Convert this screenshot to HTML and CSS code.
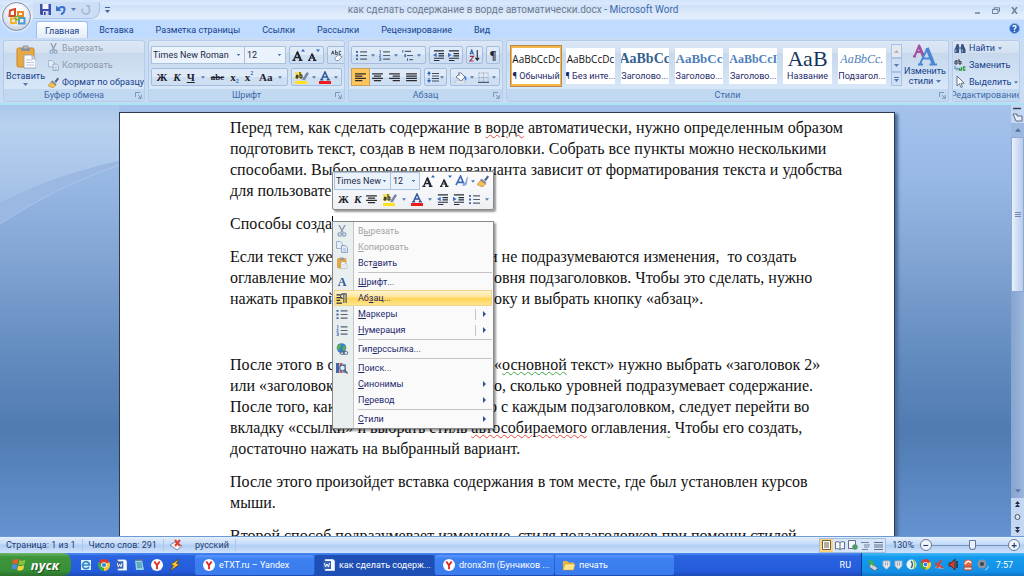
FILE: index.html
```html
<!DOCTYPE html>
<html lang="ru">
<head>
<meta charset="utf-8">
<title>как сделать содержание в ворде автоматически.docx - Microsoft Word</title>
<link rel="stylesheet" href="styles.css">
</head>
<body>
<svg class="sprite" aria-hidden="true">
  <symbol id="i-arrow" viewBox="0 0 5 3"><path d="M0 0h5L2.500 3z" fill="#5779ad"/></symbol>
  <symbol id="i-launch" viewBox="0 0 7 7"><path d="M.5 5V.5H5M3 3l3 3M6.300 3v3.300H3" fill="none" stroke="#7c94b8"/></symbol>
  <symbol id="i-cut" viewBox="0 0 12 12"><path d="M3 0l4 7.500M9 0L5 7.500" stroke="#8fa0b8" stroke-width="1.500" fill="none"/><circle cx="3.800" cy="9.500" r="1.700" fill="none" stroke="#8fa3bf" stroke-width="1.300"/><circle cx="8.200" cy="9.500" r="1.700" fill="none" stroke="#8fa3bf" stroke-width="1.300"/></symbol>
  <symbol id="i-copy" viewBox="0 0 12 12"><path d="M.5.5h4l2 2v5h-6z" fill="#e6edf6" stroke="#9fb2cc"/><path d="M5.500 4.500h4l2 2v5h-6z" fill="#dfe8f4" stroke="#94a9c6"/><path d="M7 8h3M7 10h3" stroke="#a8bad3"/></symbol>
  <symbol id="i-paste" viewBox="0 0 20 24"><rect x="1" y="3" width="17" height="19" rx="1.500" fill="#e9a941" stroke="#c98722"/><path d="M5 3h9v3H5z" fill="#8d949e"/><path d="M7 1h5v3H7z" fill="#b8bec6" stroke="#727a86" stroke-width=".6"/><path d="M8 10h8l4 4v9H8z" fill="#fbfdff" stroke="#8c9bb0" stroke-width=".8"/><path d="M16 10v4h4" fill="#cdd9ea" stroke="#8c9bb0" stroke-width=".6"/><path d="M10 15h6M10 17.500h8M10 20h8" stroke="#a9bad2" stroke-width=".8"/></symbol>
  <symbol id="i-brush" viewBox="0 0 12 12"><path d="M7 5l3.500-4.500 1.500 1.300L9 6z" fill="#4d5f86"/><path d="M4.500 3.500L9.500 7.500 8 9.500 3 5.500z" fill="#7f8fb3"/><path d="M3.500 5.500L8.500 9l-3 3-5.500-2.500z" fill="#f3c252" stroke="#a9792a" stroke-width=".6"/></symbol>
  <symbol id="i-bullets" viewBox="0 0 12 12"><path d="M4.500 2H12M4.500 6H12M4.500 10H12" stroke="#56606f" stroke-width="1.200"/><path d="M0 1h2.200v2H0zM0 5h2.200v2H0zM0 9h2.200v2H0z" fill="#3a62ad"/></symbol>
  <symbol id="i-numbers" viewBox="0 0 12 12"><path d="M4.500 2H12M4.500 6H12M4.500 10H12" stroke="#56606f" stroke-width="1.200"/><path d="M.5.500h1v3M0 4.600h1.800v1L.3 7H2M0 8.600h2v3H0M.6 10H2" stroke="#3a62ad" fill="none" stroke-width=".8"/></symbol>
  <symbol id="i-multi" viewBox="0 0 12 12"><path d="M3 1.500h7M5.500 6H12M8 10.500h4" stroke="#56606f" stroke-width="1.200"/><path d="M.8 0v3M3 4.800h1v2.500H3zM6 9v3" stroke="#3a62ad" fill="none"/></symbol>
  <symbol id="i-outdent" viewBox="0 0 12 12"><path d="M1 1h11M6 4h6M6 6.500h6M1 9h11M1 11.500h6" stroke="#222b3a" stroke-width="1.300"/><path d="M4 3v5L0 5.500z" fill="#3a6fc4"/></symbol>
  <symbol id="i-indent" viewBox="0 0 12 12"><path d="M1 1h11M6 4h6M6 6.500h6M1 9h11M1 11.500h6" stroke="#222b3a" stroke-width="1.300"/><path d="M0 3v5l4-2.500z" fill="#3a6fc4"/></symbol>
  <symbol id="i-left" viewBox="0 0 12 10"><path d="M0 1h12M0 3.500h8M0 6h12M0 8.500h8" stroke="#2b2b2f" stroke-width="1.300"/></symbol>
  <symbol id="i-center" viewBox="0 0 12 10"><path d="M0 1h12M2 3.500h8M0 6h12M2 8.500h8" stroke="#2b2b2f" stroke-width="1.300"/></symbol>
  <symbol id="i-right" viewBox="0 0 12 10"><path d="M0 1h12M4 3.500h8M0 6h12M4 8.500h8" stroke="#2b2b2f" stroke-width="1.300"/></symbol>
  <symbol id="i-justify" viewBox="0 0 12 10"><path d="M0 1h12M0 3.500h12M0 6h12M0 8.500h12" stroke="#2b2b2f" stroke-width="1.300"/></symbol>
  <symbol id="i-spacing" viewBox="0 0 12 12"><path d="M5 2.500h7M5 5h7M5 7.500h7M5 10h7" stroke="#444c5a"/><path d="M2 0l2 3H0zM2 12l2-3H0z" fill="#2f66bf"/><path d="M2 2v8" stroke="#2f66bf" stroke-dasharray="3 2"/></symbol>
  <symbol id="i-bucket" viewBox="0 0 13 12"><path d="M2 6l4.500-4.500L11 6l-4 4z" fill="#f6f8fb" stroke="#707d92"/><path d="M5 1v4" stroke="#707d92"/><path d="M10.500 4.500c2 1 2.500 3 1.500 5C10.500 9 10.500 7 10.500 4.500z" fill="#3c77cf"/><path d="M1 10h10v2H1z" fill="#fff" stroke="#97a5ba" stroke-width=".6"/></symbol>
  <symbol id="i-border" viewBox="0 0 12 12"><path d="M1 1h10v10M1 1v10M6 1v10M1 6h10" fill="none" stroke="#8b98ad" stroke-dasharray="1 1"/><path d="M0 11.300h12" stroke="#4c5a70" stroke-width="1.200"/></symbol>
  <symbol id="i-highlight" viewBox="0 0 14 13"><path d="M0 10h12v3H0z" fill="#ffe21c"/><path d="M0 1h7v7H0z" fill="#f4e05a"/><path d="M1 4.300h2V7H1V5.700h2M5 1v6h2V4H5" fill="none" stroke="#20242c" stroke-width="1"/><path d="M7.500 8.500L12 1.500l1.500 1L9.500 9z" fill="#7f93b8" stroke="#45557a" stroke-width=".5"/></symbol>
  <symbol id="i-fontcolor" viewBox="0 0 12 13"><path d="M0 10h12v3H0z" fill="#ee1c1c"/><path d="M2.500 8.500L6 1l3.500 7.500M3.800 6h4.400M1.200 8.700h3M7.800 8.700h3" fill="none" stroke="#31579c" stroke-width="1.500"/></symbol>
  <symbol id="i-eraser" viewBox="0 0 14 13"><path d="M1.500 6l1.500-4 1.500 4M2 4.500h2M6 1v5h2V3.500H6M12 2.500h-2V6h2" fill="none" stroke="#333c4c" stroke-width=".9"/><path d="M5 10l4-3.500 4 2-4 4H6.500z" fill="#fff" stroke="#7384a0" stroke-width=".9"/></symbol>
  <symbol id="i-sort" viewBox="0 0 12 14"><path d="M1 6L3 1l2 5M1.500 4.500h3" fill="none" stroke="#2c58b0" stroke-width="1.200"/><path d="M1 8h4L1 13h4" fill="none" stroke="#a3304a" stroke-width="1.200"/><path d="M9 1v11M7 9.500L9 12l2-2.500" fill="none" stroke="#20242c" stroke-width="1.200"/></symbol>
  <symbol id="i-bigstyles" viewBox="0 0 24 22"><path d="M1.500 12.500L6 2l4.500 10M3 8h6M0 12.500h3" fill="none" stroke="#a34f9c" stroke-width="2"/><path d="M6 2l4.500 10.500" stroke="#a34f9c" stroke-width="3"/><path d="M7 20L14 5M9.500 14.500h8M5 20.500h5M16.500 20.500H24" fill="none" stroke="#4a86d2" stroke-width="1.800"/><path d="M14 4l6.500 16" stroke="#4a86d2" stroke-width="3.500"/></symbol>
  <symbol id="i-binocs" viewBox="0 0 12 12"><path d="M1 5l1.500-4h2L5 5v6H0V7zM11 5L9.500 1h-2L7 5v6h5V7z" fill="#39527f"/><path d="M5 4h2v3H5z" fill="#7590bd"/><path d="M1.500 7v3M8.500 7v3" stroke="#b4c8e8"/></symbol>
  <symbol id="i-replace" viewBox="0 0 12 12"><path d="M3 2H1v3h2V1M5 0v5h2V2.500H5" fill="none" stroke="#2a3140"/><path d="M1 7v3h3M3 8.500L4.500 10 3 11.500" fill="none" stroke="#5e82c0"/><path d="M7.500 8v3h-2V9M11.500 8H9.500v3h2" fill="none" stroke="#2f9d3d" stroke-width="1.300"/></symbol>
  <symbol id="i-pointer" viewBox="0 0 12 12"><path d="M3 0v10l2.500-2.300L7 11.500l1.500-.7L7 7.300h3.300z" fill="#fff" stroke="#58677f" stroke-width=".9"/></symbol>
  <symbol id="i-para" viewBox="0 0 12 12"><path d="M0 2h4M0 5h5M0 8h4M0 11h6" stroke="#222b3a" stroke-width="1.300"/><path d="M11 1H7a2.500 2.500 0 0 0 0 5M8 1v10M10.500 1v10" fill="none" stroke="#3b4c74" stroke-width="1.200"/></symbol>
  <symbol id="i-globe" viewBox="0 0 12 12"><circle cx="5.500" cy="5" r="4.800" fill="#3a7fcb"/><path d="M2 2c3-2 4 1 2.500 2S4 7 2.500 7 0 4 2 2zM7 3c2-1 3 1 2.500 3S7 8 6.500 6z" fill="#5cb04e"/><rect x="4" y="8.500" width="4.500" height="2.800" rx="1.400" fill="none" stroke="#5b6980"/><rect x="7.300" y="8.500" width="4.500" height="2.800" rx="1.400" fill="none" stroke="#5b6980"/></symbol>
  <symbol id="i-lookup" viewBox="0 0 12 12"><path d="M0 1h3v10H0z" fill="#3f67b3"/><path d="M3.500 1h3v10h-3z" fill="#b85c56"/><path d="M7 2h3v9H7z" fill="#7193c9"/><circle cx="6.500" cy="6" r="2.800" fill="#dcebfa" stroke="#4c5a75"/><path d="M8.500 8l3 3.500" stroke="#4c5a75" stroke-width="1.500"/></symbol>
  <symbol id="i-styleset" viewBox="0 0 14 13"><path d="M1 11L6 1l4 10M3 8h6" fill="none" stroke="#3b69b5" stroke-width="1.700"/><path d="M8 12c0-3 1-4 3-4l2-6 1 .5L13 9c0 2-2 3-5 3z" fill="#8ca9d8"/></symbol>
  <symbol id="i-word" viewBox="0 0 12 12"><path d="M2 0h8l2 2v10H2z" fill="#f7faff" stroke="#7c99cf" stroke-width=".7"/><path d="M0 2h8v8H0z" fill="#3763b5"/><path d="M1.500 4l1 4L4 5l1.500 3 1-4" fill="none" stroke="#fff"/></symbol>
  <symbol id="i-yandex" viewBox="0 0 12 12"><circle cx="6" cy="6" r="6" fill="#fff"/><path d="M3.300 2.500L6 6.200v4M8.700 2.500L6 6.200" fill="none" stroke="#e0261c" stroke-width="1.800"/></symbol>
  <symbol id="i-folder" viewBox="0 0 12 12"><path d="M0 2h4l1.500 1.500H11V11H0z" fill="#e8b53c"/><path d="M0 11l2-6h10l-1.500 6z" fill="#ffe588" stroke="#c99a2d" stroke-width=".5"/></symbol>
  <symbol id="i-chrome" viewBox="0 0 12 12"><path d="M6 6L.8 3a6 6 0 0 1 10.400 0z" fill="#df3b2e"/><path d="M6 6l5.200-3A6 6 0 0 1 6 12z" fill="#f7c92b"/><path d="M6 6v6A6 6 0 0 1 .8 3z" fill="#42a547"/><circle cx="6" cy="6" r="2.800" fill="#fff"/><circle cx="6" cy="6" r="2.100" fill="#3f7fe0"/></symbol>
  <symbol id="i-grow" viewBox="0 0 14 14"><path d="M1.800 12L5.300 4l3.500 8M3 9.500h4.500M.3 12.300h3.200M6.800 12.300h3.700" fill="none" stroke="#1f2430" stroke-width="1.300"/><path d="M5.300 4l3.400 8" stroke="#1f2430" stroke-width="2"/><path d="M9 3.500L11 1l2 2.500z" fill="#2f66bf"/></symbol>
  <symbol id="i-shrink" viewBox="0 0 14 14"><path d="M2.200 12L5 6l2.800 6M3 10h4M1 12.300h2.500M6 12.300h3.500" fill="none" stroke="#1f2430" stroke-width="1.200"/><path d="M5 6l2.700 6" stroke="#1f2430" stroke-width="1.800"/><path d="M9 1.500h4L11 4z" fill="#2f66bf"/></symbol>
</svg>

<header class="titlebar">
  <div class="quick">
    <button aria-label="Сохранить"><svg width="11" height="11" viewBox="0 0 11 11"><path d="M0 0h11v11H1L0 10z" fill="#3d4fae"/><path d="M2.500 0h6v5h-6z" fill="#f4f7fd"/><path d="M3 7h5.500v4H3z" fill="#cfd8ee"/><path d="M4 8h1.500v3H4z" fill="#2a3a86"/></svg></button>
    <button aria-label="Отменить"><svg width="10" height="10" viewBox="0 0 10 10"><path d="M2 4C5 1 9 1.500 8.500 5c-.2 2-1.500 3.500-3.500 4.500" fill="none" stroke="#3a6fd0" stroke-width="2"/><path d="M0 .5v5.500h5.500z" fill="#3a6fd0"/></svg></button>
    <svg width="5" height="3"><use href="#i-arrow"/></svg>
    <button aria-label="Повторить"><svg width="10" height="10" viewBox="0 0 10 10"><path d="M8 3C9.500 6 8 9 5 9S.5 6.500 1.500 3.500" fill="none" stroke="#a9b9d2" stroke-width="1.800"/><path d="M4.500 0H9v4.500z" fill="#a9b9d2"/></svg></button>
  </div>
  <button class="custom" aria-label="Настройка панели"><svg width="5" height="6" viewBox="0 0 5 6"><path d="M0 .5h5" stroke="#43639a"/><path d="M0 3h5L2.500 6z" fill="#43639a"/></svg></button>
  <h1 class="caption"><span>как сделать содержание в ворде автоматически.docx</span> - Microsoft Word</h1>
  <div class="winbtns">
    <button aria-label="Свернуть"><svg width="7" height="7" viewBox="0 0 7 7"><path d="M1 6h5" stroke="#6d7f9c" stroke-width="1.500"/></svg></button>
    <button aria-label="Развернуть"><svg width="8" height="7" viewBox="0 0 8 7"><path d="M2 2V.800h5.500V4.500H6.500M.5 2.500h5.500v4H.500z" fill="none" stroke="#6d7f9c"/></svg></button>
    <button aria-label="Закрыть"><svg width="7" height="7" viewBox="0 0 7 7"><path d="M1 0l5 7M6 0L1 7" stroke="#6d7f9c" stroke-width="1.500"/></svg></button>
  </div>
  <button class="orb" aria-label="Кнопка Office"><svg width="18" height="18" viewBox="0 0 18 18" fill="none" stroke-width="2"><path d="M2 2.500l5-1.500v7H1.500z" stroke="#d84a26"/><path d="M10 4h5v4h-5z" stroke="#ef8a1f"/><path d="M3 10.500h5V15H3z" stroke="#efb52c"/><path d="M11 10h5.500v5.500H11z" stroke="#4a9bd2"/><path d="M7.500 8.500h4v3h-4z" stroke="#7bb342" stroke-width="1.500"/></svg></button>
</header>

<nav class="tabs">
  <a href="#" class="tab active">Главная</a><a href="#" class="tab">Вставка</a><a href="#" class="tab">Разметка страницы</a><a href="#" class="tab">Ссылки</a><a href="#" class="tab">Рассылки</a><a href="#" class="tab">Рецензирование</a><a href="#" class="tab">Вид</a>
  <button class="help" aria-label="Справка">?</button>
</nav>

<div class="ribbon">
  <section class="group clipboard">
    <div class="body">
      <button class="big"><svg width="20" height="24"><use href="#i-paste"/></svg><span>Вставить</span><svg width="5" height="3"><use href="#i-arrow"/></svg></button>
      <div class="stack">
        <button class="cmd" disabled><svg width="11" height="11"><use href="#i-cut"/></svg>Вырезать</button>
        <button class="cmd" disabled><svg width="11" height="11"><use href="#i-copy"/></svg>Копировать</button>
        <button class="cmd"><svg width="11" height="11"><use href="#i-brush"/></svg>Формат по образцу</button>
      </div>
    </div>
    <h2 class="label">Буфер обмена<svg width="7" height="7"><use href="#i-launch"/></svg></h2>
  </section>

  <section class="group font">
    <div class="body rows">
      <div class="row">
        <div class="combos"><select class="combo name" aria-label="Шрифт"><option>Times New Roman</option></select><select class="combo size" aria-label="Размер шрифта"><option>12</option></select></div>
        <div class="set"><button aria-label="Увеличить размер"><svg width="14" height="14"><use href="#i-grow"/></svg></button><button aria-label="Уменьшить размер"><svg width="14" height="14"><use href="#i-shrink"/></svg></button></div>
        <div class="set"><button aria-label="Очистить формат"><svg width="13" height="12"><use href="#i-eraser"/></svg></button></div>
      </div>
      <div class="row">
        <div class="set wide"><button class="glyph b">Ж</button><button class="glyph i">К</button><button class="glyph u">Ч</button><svg width="4" height="3"><use href="#i-arrow"/></svg><button class="glyph s">abc</button><button class="glyph">x<sub>2</sub></button><button class="glyph">x<sup>2</sup></button><button class="glyph">Aa</button><svg width="4" height="3"><use href="#i-arrow"/></svg></div>
        <div class="set grow1"><button aria-label="Цвет выделения"><svg width="14" height="13"><use href="#i-highlight"/></svg></button><svg width="4" height="3"><use href="#i-arrow"/></svg><button aria-label="Цвет текста"><svg width="12" height="13"><use href="#i-fontcolor"/></svg></button><svg width="4" height="3"><use href="#i-arrow"/></svg></div>
      </div>
    </div>
    <h2 class="label">Шрифт<svg width="7" height="7"><use href="#i-launch"/></svg></h2>
  </section>

  <section class="group paragraph">
    <div class="body rows">
      <div class="row">
        <div class="set lists"><button aria-label="Маркеры"><svg width="11" height="11"><use href="#i-bullets"/></svg></button><svg width="4" height="3"><use href="#i-arrow"/></svg><button aria-label="Нумерация"><svg width="11" height="11"><use href="#i-numbers"/></svg></button><svg width="4" height="3"><use href="#i-arrow"/></svg><button aria-label="Многоуровневый список"><svg width="11" height="11"><use href="#i-multi"/></svg></button><svg width="4" height="3"><use href="#i-arrow"/></svg></div>
        <div class="set pair"><button aria-label="Уменьшить отступ"><svg width="11" height="11"><use href="#i-outdent"/></svg></button><button aria-label="Увеличить отступ"><svg width="11" height="11"><use href="#i-indent"/></svg></button></div>
        <div class="set"><button aria-label="Сортировка"><svg width="11" height="13"><use href="#i-sort"/></svg></button></div>
        <div class="set"><button class="glyph pil">¶</button></div>
      </div>
      <div class="row">
        <div class="set aligns"><button class="on" aria-label="По левому краю"><svg width="11" height="9"><use href="#i-left"/></svg></button><button aria-label="По центру"><svg width="11" height="9"><use href="#i-center"/></svg></button><button aria-label="По правому краю"><svg width="11" height="9"><use href="#i-right"/></svg></button><button aria-label="По ширине"><svg width="11" height="9"><use href="#i-justify"/></svg></button></div>
        <div class="set"><button aria-label="Интервал"><svg width="12" height="12"><use href="#i-spacing"/></svg></button><svg width="4" height="3"><use href="#i-arrow"/></svg></div>
        <div class="set grow1"><button aria-label="Заливка"><svg width="13" height="12"><use href="#i-bucket"/></svg></button><svg width="4" height="3"><use href="#i-arrow"/></svg><button aria-label="Границы"><svg width="11" height="11"><use href="#i-border"/></svg></button><svg width="4" height="3"><use href="#i-arrow"/></svg></div>
      </div>
    </div>
    <h2 class="label">Абзац<svg width="7" height="7"><use href="#i-launch"/></svg></h2>
  </section>

  <section class="group styles">
    <div class="body">
      <div class="gallery">
        <button class="style chosen"><b class="sample">AaBbCcDc</b><span>¶ Обычный</span></button>
        <button class="style"><b class="sample">AaBbCcDc</b><span>¶ Без инте...</span></button>
        <button class="style"><b class="sample h1">AaBbCc</b><span>Заголово...</span></button>
        <button class="style"><b class="sample h2">AaBbCc</b><span>Заголово...</span></button>
        <button class="style"><b class="sample h3">AaBbCcI</b><span>Заголово...</span></button>
        <button class="style"><b class="sample title">АаВ</b><span>Название</span></button>
        <button class="style"><b class="sample subtitle">AaBbCc.</b><span>Подзагол...</span></button>
      </div>
      <div class="spin"><button aria-label="Вверх" class="off"><svg width="5" height="3" viewBox="0 0 5 3"><path d="M0 3h5L2.500 0z" fill="#a9b3c2"/></svg></button><button aria-label="Вниз"><svg width="5" height="3"><use href="#i-arrow"/></svg></button><button aria-label="Ещё"><svg width="5" height="5" viewBox="0 0 5 5"><path d="M0 .5h5" stroke="#5779ad"/><path d="M0 2h5L2.500 5z" fill="#5779ad"/></svg></button></div>
      <button class="big change"><svg width="24" height="22"><use href="#i-bigstyles"/></svg><span>Изменить</span><span>стили <svg width="5" height="3"><use href="#i-arrow"/></svg></span></button>
    </div>
    <h2 class="label">Стили<svg width="7" height="7"><use href="#i-launch"/></svg></h2>
  </section>

  <section class="group editing">
    <div class="body">
      <div class="stack">
        <button class="cmd"><svg width="12" height="11"><use href="#i-binocs"/></svg>Найти<svg width="4" height="3"><use href="#i-arrow"/></svg></button>
        <button class="cmd"><svg width="12" height="12"><use href="#i-replace"/></svg>Заменить</button>
        <button class="cmd"><svg width="12" height="12"><use href="#i-pointer"/></svg>Выделить<svg width="4" height="3"><use href="#i-arrow"/></svg></button>
      </div>
    </div>
    <h2 class="label">Редактирование</h2>
  </section>
</div>

<main class="workspace">
  <svg class="swoosh" viewBox="0 0 119 130" preserveAspectRatio="none" aria-hidden="true">
    <defs><linearGradient id="sw" x1="0" y1="0" x2="0" y2="1"><stop offset="0" stop-color="#a9c8ec"/><stop offset=".2" stop-color="#b7d1ef"/><stop offset="1" stop-color="#a2bfe6"/></linearGradient></defs>
    <path d="M0 0h119v56Q55 70 0 98z" fill="url(#sw)"/><path d="M0 98Q55 70 119 56v4Q55 82 0 119z" fill="#9ab8e2"/><path d="M0 119Q55 82 119 60" fill="none" stroke="#abc5ea"/>
  </svg>
  <article class="page">
    <p>Перед тем, как сделать содержание в <u class="spell">ворде</u> автоматически, нужно определенным образом<br>подготовить текст, создав в нем подзаголовки. Собрать все пункты можно несколькими<br>способами. Выбор определенного варианта зависит от форматирования текста и удобства<br>для пользовате</p>
    <p>Способы созда<span class="caret"></span></p>
    <p><span class="split"><span class="lead short">Если текст уже</span><span>и не подразумеваются изменения,&nbsp; то создать</span></span><span class="split"><span class="lead">оглавление мож</span><span>овня подзаголовков. Чтобы это сделать, нужно</span></span><span class="split"><span class="lead">нажать правкой</span><span>оку и выбрать кнопку «абзац».</span></span></p>
    <p class="empty">&nbsp;</p>
    <p><span class="split"><span class="lead">После этого в с</span><span>«<u class="grammar">основной</u> текст» нужно выбрать «заголовок 2»</span></span><span class="split"><span class="lead">или «заголовок</span><span>о, сколько уровней подразумевает содержание.</span></span><span class="split"><span class="lead short">После того, как</span><span>о с каждым подзаголовком, следует перейти во</span></span>вкладку «ссылки» и выбрать стиль <u class="spell">автособираемого</u> оглавления<u class="grammar">.</u> Чтобы его создать,<br>достаточно нажать на выбранный вариант.</p>
    <p>После этого произойдет вставка содержания в том месте, где был установлен курсов<br>мыши.</p>
    <p>Второй способ подразумевает изменение&nbsp; стиля подзаголовков при помощи стилей.</p>
  </article>

  <div class="scrollbar" aria-hidden="true">
    <svg class="ruler" width="13" height="18" viewBox="0 0 13 18"><path d="M2 3.500h8" stroke="#31415e" stroke-width="1.500"/><path d="M2 9h4v2h5v5H5z" fill="#e8eefa" stroke="#5a6a88"/></svg>
    <span class="cap"><svg width="6" height="4" viewBox="0 0 5 3"><path d="M0 3h5L2.500 0z" fill="#4d6fa5"/></svg></span>
    <span class="thumb"><svg width="6" height="7" viewBox="0 0 6 7"><path d="M0 1.500h6M0 3.500h6M0 5.500h6" stroke="#6d8ab8"/></svg></span>
    <span class="track"><svg width="6" height="4"><use href="#i-arrow"/></svg></span>
    <span class="nav"><svg width="7" height="32" viewBox="0 0 7 32"><path d="M1 3l2.500-3L6 3zM1 6l2.500-3L6 6zM1 26h5l-2.500 3zM1 29h5l-2.500 3z" fill="#252c3c"/><circle cx="3.500" cy="16" r="2.500" fill="#dfe5f0" stroke="#4a536a"/></svg></span>
  </div>

  <div class="minibar">
    <div class="minirow">
      <div class="combos"><select class="combo mname" aria-label="Шрифт"><option>Times New</option></select><select class="combo msize" aria-label="Размер"><option>12</option></select></div>
      <button aria-label="Увеличить размер"><svg width="14" height="14"><use href="#i-grow"/></svg></button><button aria-label="Уменьшить размер"><svg width="14" height="14"><use href="#i-shrink"/></svg></button>
      <button aria-label="Стили"><svg width="13" height="12"><use href="#i-styleset"/></svg></button><svg width="4" height="3"><use href="#i-arrow"/></svg>
      <button aria-label="Формат по образцу"><svg width="12" height="12"><use href="#i-brush"/></svg></button>
    </div>
    <div class="minirow">
      <button class="glyph b">Ж</button><button class="glyph i">К</button><button aria-label="По центру"><svg width="11" height="9"><use href="#i-center"/></svg></button>
      <button aria-label="Выделение"><svg width="14" height="13"><use href="#i-highlight"/></svg></button><svg width="4" height="3"><use href="#i-arrow"/></svg>
      <button aria-label="Цвет"><svg width="12" height="13"><use href="#i-fontcolor"/></svg></button><svg width="4" height="3"><use href="#i-arrow"/></svg>
      <button aria-label="Уменьшить отступ"><svg width="11" height="11"><use href="#i-outdent"/></svg></button><button aria-label="Увеличить отступ"><svg width="11" height="11"><use href="#i-indent"/></svg></button><button aria-label="Маркеры"><svg width="11" height="11"><use href="#i-bullets"/></svg></button><svg width="4" height="3"><use href="#i-arrow"/></svg>
    </div>
  </div>

  <div class="menu" role="menu">
    <button class="item" disabled><svg width="12" height="12"><use href="#i-cut"/></svg><span>В<u>ы</u>резать</span></button>
    <button class="item" disabled><svg width="12" height="12"><use href="#i-copy"/></svg><span><u>К</u>опировать</span></button>
    <button class="item"><svg width="11" height="12"><use href="#i-paste"/></svg><span>Вст<u>а</u>вить</span></button>
    <hr>
    <button class="item"><b class="fonta">A</b><span><u>Ш</u>рифт...</span></button>
    <button class="item hot"><svg width="11" height="11"><use href="#i-para"/></svg><span>Аб<u>з</u>ац...</span></button>
    <button class="item more divided"><svg width="11" height="11"><use href="#i-bullets"/></svg><span><u>М</u>аркеры</span></button>
    <button class="item more divided"><svg width="11" height="11"><use href="#i-numbers"/></svg><span><u>Н</u>умерация</span></button>
    <hr>
    <button class="item"><svg width="12" height="12"><use href="#i-globe"/></svg><span>Гип<u>е</u>рссылка...</span></button>
    <hr>
    <button class="item"><svg width="12" height="12"><use href="#i-lookup"/></svg><span><u>П</u>оиск...</span></button>
    <button class="item more"><i></i><span><u>С</u>инонимы</span></button>
    <button class="item more"><i></i><span>П<u>е</u>ревод</span></button>
    <hr>
    <button class="item more"><i></i><span><u>С</u>тили</span></button>
  </div>
</main>

<footer class="status">
  <span class="cell">Страница: 1 из 1</span>
  <span class="cell">Число слов: 291</span>
  <span class="cell proof"><svg width="13" height="12" viewBox="0 0 13 12"><path d="M0 6l5-3 7 4-5 4z" fill="#f5f8fc" stroke="#7d8ca8"/><path d="M5 1l5 6M10 1L5 7" stroke="#e0402c" stroke-width="2"/></svg></span>
  <span class="cell">русский</span>
  <div class="views">
    <button class="on" aria-label="Разметка"><svg width="9" height="10" viewBox="0 0 9 10"><path d="M.5.5h8v9h-8z" fill="#fff" stroke="#6d6040"/><path d="M2 3h5M2 5h5M2 7h5" stroke="#6d6040"/></svg></button>
    <button aria-label="Чтение"><svg width="10" height="9" viewBox="0 0 10 9"><path d="M.5 1Q3 0 5 1.500 7 0 9.500 1v7Q7 7 5 8.500 3 7 .5 8zM5 1.500v7" fill="#f4f7fc" stroke="#5f6f8b"/></svg></button>
    <button aria-label="Веб"><svg width="10" height="10" viewBox="0 0 10 10"><path d="M.5.5h7v8h-7z" fill="#f4f7fc" stroke="#5f6f8b"/><circle cx="7" cy="7" r="2.700" fill="#4e9a6a"/></svg></button>
    <button aria-label="Структура"><svg width="9" height="9" viewBox="0 0 9 9"><path d="M0 1.500h8M3 4h6M3 6h5M1 8.500h6" stroke="#75849f"/></svg></button>
    <button aria-label="Черновик"><svg width="9" height="9" viewBox="0 0 9 9"><path d="M0 1.500h9M0 4h9M0 6h9M0 8.500h9" stroke="#5f6f8b"/></svg></button>
  </div>
  <span class="percent">130%</span>
  <button class="round" aria-label="Уменьшить">−</button>
  <input class="zoom" type="range" min="0" max="100" value="53" aria-label="Масштаб">
  <button class="round" aria-label="Увеличить">+</button>
</footer>

<div class="taskbar">
  <button class="start"><svg width="14" height="13" viewBox="0 0 14 13"><path d="M1 2.500Q3.500 0 6.500 1.500L5.500 6Q3 4.500 0 6.500z" fill="#ee5a2b"/><path d="M7.500 2Q10 3.500 13.500 1.500L12.500 6Q9 8 6.500 6.500z" fill="#86c440"/><path d="M0 7.500Q3 5.500 5.300 7L4.300 11.500Q2 10-1 12z" fill="#4c8af0"/><path d="M6.200 7.500Q9 9 12.200 7L11.200 11.500Q8 13.500 5.200 12z" fill="#f8d13c"/></svg>пуск</button>
  <div class="launch">
    <button aria-label="Internet Explorer"><svg width="12" height="12" viewBox="0 0 12 12"><path d="M1 1h10v10H1z" fill="#dcecf8"/><path d="M9 8A3.500 3.500 0 1 1 9.500 6H3" fill="none" stroke="#2d86cf" stroke-width="1.700"/></svg></button>
    <button aria-label="Chrome"><svg width="12" height="12"><use href="#i-chrome"/></svg></button>
    <button aria-label="Word"><svg width="11" height="12"><use href="#i-word"/></svg></button>
    <button aria-label="Блокнот"><svg width="12" height="12" viewBox="0 0 12 12"><path d="M2 1h7l2 10H3z" fill="#8fd0e6"/><path d="M3.500 4h5M4 6h5M4 8h5" stroke="#397f9c"/><path d="M2 1h8" stroke="#5b6f86" stroke-width="1.500"/></svg></button>
    <button aria-label="Яндекс"><svg width="12" height="12"><use href="#i-yandex"/></svg></button>
    <button aria-label="Winamp"><svg width="12" height="12" viewBox="0 0 12 12"><path d="M10 0L1.500 5.500l3 1L1 12l9.500-6.500-3-1z" fill="#f6c33a" stroke="#5b4320" stroke-width=".8"/></svg></button>
  </div>
  <div class="tasks">
    <button class="task"><svg width="12" height="12"><use href="#i-yandex"/></svg>eTXT.ru – Yandex</button>
    <button class="task current"><svg width="12" height="12"><use href="#i-word"/></svg>как сделать содерж...</button>
    <button class="task"><svg width="12" height="12"><use href="#i-yandex"/></svg>dronx3m (Бунчиков ...</button>
    <button class="task"><svg width="12" height="12"><use href="#i-folder"/></svg>печать</button>
  </div>
  <span class="lang">RU</span>
  <div class="tray">
    <svg width="11" height="12" viewBox="0 0 11 12"><path d="M3 4l7 5-3 3-6-4z" fill="#c9d1dc" stroke="#4b596b" stroke-width=".7"/><path d="M1 1l5 1-1.500 1.500L7 6 5 7 3 5 1.500 6z" fill="#42b03c"/></svg>
    <svg width="9" height="10" viewBox="0 0 9 10"><path d="M1 1h7v5L5 9H4L1 6z" fill="#dfe4ea" stroke="#a7b2c0"/><path d="M3.500 2.500v3M5.500 2.500v3" stroke="#9aa5b5"/></svg>
    <svg width="9" height="10" viewBox="0 0 9 10"><path d="M1 1h7v5L5 9H4L1 6z" fill="#dfe4ea" stroke="#a7b2c0"/><path d="M3.500 2.500v3M5.500 2.500v3" stroke="#9aa5b5"/></svg>
    <svg width="11" height="11" viewBox="0 0 11 11"><circle cx="5.500" cy="5.500" r="5" fill="#f2f6fa"/><path d="M5 2q3 3.500 0 7" fill="none" stroke="#2b6f9c" stroke-width="1.500"/><path d="M7.500 1q3 4.500 0 9" fill="none" stroke="#8cc63e" stroke-width="1.500"/></svg>
    <svg width="11" height="11"><use href="#i-chrome"/></svg>
    <svg width="11" height="11" viewBox="0 0 11 11"><path d="M1 9l4-5 5 6z" fill="#a9b7c7"/><path d="M1 4l8 5M7 1L3 9" stroke="#d9412f" stroke-width="2"/></svg>
    <svg width="11" height="11" viewBox="0 0 11 11"><path d="M1 4h2l4-4v11L3 7H1z" fill="#d53e27" stroke="#3c1b14" stroke-width=".8"/><path d="M9 2v7" stroke="#2c2c30" stroke-width="1.500"/></svg>
    <svg width="12" height="12" viewBox="0 0 12 12"><circle cx="6" cy="4.500" r="4" fill="#e8643c"/><path d="M3 5q3-5 6-1" fill="none" stroke="#fff" stroke-width="1.500"/><path d="M2 8h8v3H2z" fill="#d9e2ee" stroke="#b04228"/></svg>
    <svg width="12" height="12" viewBox="0 0 12 12"><circle cx="5" cy="5" r="4.500" fill="#8c949f"/><circle cx="5" cy="5" r="2" fill="#3d434c"/><path d="M8 11q3-1 3.500-4" fill="none" stroke="#c8d8f4"/></svg>
    <time>7:57</time>
  </div>
</div>
</body>
</html>
```
FILE: styles.css
```css
* { box-sizing: border-box; }
body {
  margin: 0;
  height: 100vh;
  display: flex;
  flex-direction: column;
  overflow: hidden;
  font: 9px/12px Roboto, "Noto Sans", sans-serif;
  color: #15428b;
  background: #bfdbff;
}
button, select {
  font: inherit;
  color: inherit;
  border: 0;
  padding: 0;
  margin: 0;
  background: none;
  white-space: nowrap;
}
button { display: flex; align-items: center; justify-content: center; }
svg { display: block; flex: none; }
.sprite { position: absolute; width: 0; height: 0; }
h1, h2 { margin: 0; font-weight: normal; }

/* Title bar */
.titlebar {
  position: relative;
  z-index: 2;
  flex: none;
  height: 20px;
  display: flex;
  align-items: center;
  padding-left: 33px;
  background: linear-gradient(#d3e4fa 0, #dbe9fb 4px, #cfe1f8 6px, #e4effd 18px, #cfe2fb 20px);
}
.quick {
  display: flex;
  align-items: center;
  gap: 5px;
  width: 67px;
  height: 17px;
  padding-left: 7px;
  border: 1px solid #a9c3e8;
  border-width: 0 1px 1px 0;
  border-radius: 0 0 9px 0;
  background: #cbdef6;
}
.custom { margin-left: 5px; }
.caption { flex: 1; text-align: center; padding-right: 58px; font-size: 10px; color: #3e6aaa; white-space: nowrap; }
.caption { padding-right: 58px; }
.caption span { color: #6c7a90; }
.winbtns { display: flex; gap: 11px; padding-right: 6px; width: 50px; }
.winbtns button { flex: none; }
.orb {
  position: absolute;
  left: 2px;
  top: 2px;
  width: 29px;
  height: 29px;
  border-radius: 50%;
  border: 1px solid #7d8ca6;
  background: radial-gradient(circle at 50% 30%, #fff 20%, #dfe5ee 60%, #b5c1d3);
  box-shadow: 0 0 1px 1px #e8f0fb;
}

/* Tabs */
.tabs {
  flex: none;
  display: flex;
  height: 18px;
  padding-left: 36px;
  align-items: flex-end;
  background: #bfdbff;
}
.tab {
  height: 17px;
  padding: 0 11px;
  line-height: 18px;
  color: #15428b;
  text-decoration: none;
  white-space: nowrap;
}
.tab.active {
  padding: 0 8px;
  border: 1px solid #9ebde9;
  border-bottom: 0;
  border-radius: 3px 3px 0 0;
  background: linear-gradient(#fdfeff, #e3edf9);
}
.help {
  margin: 0 4px 4px auto;
  width: 11px;
  height: 11px;
  border-radius: 50%;
  border: 1px solid #8db0e0;
  background: #2a66c0;
  color: #fff;
  font-weight: bold;
}

/* Ribbon */
.ribbon {
  flex: none;
  display: flex;
  gap: 3px;
  height: 67px;
  padding: 2px 4px 1px 3px;
  background: #c9dcf4;
  border-bottom: 2px solid #a9e4f2;
}
.group {
  display: flex;
  flex-direction: column;
  border: 1px solid #b4cbe9;
  border-radius: 3px;
  background: linear-gradient(#dde8f5 0, #d2e0f1 12px, #c7d8ed 12px, #d9e8f9 50px);
  overflow: hidden;
}
.body { flex: 1; display: flex; align-items: center; min-height: 0; }
.label {
  display: flex;
  align-items: center;
  justify-content: center;
  position: relative;
  flex: none;
  height: 12px;
  background: #c1d8f1;
  color: #3e6aaa;
  font-size: 9px;
  white-space: nowrap;
}
.label svg { position: absolute; right: 2px; top: 3px; }
.clipboard { width: 142px; }
.font { width: 197px; }
.paragraph { width: 155px; }
.styles { flex: 1; }
.editing { width: 68px; }
.big { flex-direction: column; gap: 2px; width: 44px; line-height: 10px; }
.big.change { width: 46px; gap: 0; }
.big span { display: flex; align-items: center; gap: 3px; }
.stack { display: flex; flex-direction: column; gap: 5px; padding-left: 1px; }
.cmd { gap: 3px; justify-content: flex-start; line-height: 12px; }
.cmd:disabled { color: #8d99ab; }
.rows { flex-direction: column; align-items: stretch; justify-content: center; gap: 4px; padding: 2px 2px 0; }
.row { display: flex; gap: 3px; height: 18px; }
.set {
  display: flex;
  align-items: center;
  justify-content: space-around;
  gap: 1px;
  padding: 0 2px;
  border: 1px solid #a3bcdf;
  border-radius: 2px;
  background: linear-gradient(#dfeaf8 50%, #cfdff2 50%);
}
.row .set:last-child, .grow1 { flex: 1; }
.wide { width: 137px; }
.lists { width: 75px; }
.pair { width: 34px; }
.aligns { width: 70px; padding: 0; gap: 0; }
.aligns button { flex: 1; align-self: stretch; }
.aligns .on { background: #ffc65c; outline: 1px solid #c8a05c; }
.combos { display: flex; border: 1px solid #abc1de; background: #eaf2fb; }
.combo {
  appearance: none;
  height: 16px;
  padding: 0 2px 0 1px;
  color: #1c2a44;
  background: linear-gradient(#5779ad, #5779ad) right 4px top 7px / 3px 1px no-repeat, linear-gradient(#5779ad, #5779ad) right 5px top 8px / 1px 1px no-repeat;
}
.combo + .combo { border-left: 1px solid #abc1de; padding-left: 2px; }
.name { width: 92px; }
.size { width: 41px; }
.glyph { font: bold 11px/14px "Liberation Serif", serif; color: #1f2430; }
.glyph sup, .glyph sub { font-size: 6px; line-height: 6px; color: #2f66bf; }
.glyph sup { align-self: flex-start; }
.glyph sub { align-self: flex-end; }
.i { font-style: italic; }
.u { text-decoration: underline; }
.s { text-decoration: line-through; font-size: 9px; }
.pil { font-size: 13px; }

.gallery { display: flex; flex: 1; gap: 2px; padding: 1px 0 0 3px; }
.style {
  flex: 1 1 0;
  min-width: 0;
  flex-direction: column;
  height: 42px;
  gap: 3px;
  overflow: hidden;
  border: 3px solid transparent;
  border-width: 3px 2px;
  color: #1e2a6a;
  background: #fff;
  background-clip: padding-box;
  line-height: 10px;
}
.style.chosen { border-color: #f5b64a; outline: 1px solid #b58a4c; outline-offset: -1px; }
.sample { font: 10px/18px "Open Sans", "Noto Sans", sans-serif; height: 18px; color: #111; }
.sample.h1 { font: bold 14px/18px "Liberation Serif", serif; color: #365f91; }
.sample.h2 { font: bold 13px/18px "Liberation Serif", serif; color: #4f81bd; }
.sample.h3 { font: bold 12px/18px "Liberation Serif", serif; color: #4f81bd; }
.sample.title { font: 22px/18px "Liberation Serif", serif; color: #17365d; }
.sample.subtitle { font: italic 12px/18px "Liberation Serif", serif; color: #4f81bd; }
.spin { display: flex; flex-direction: column; width: 11px; height: 42px; margin-left: 3px; }
.spin button { flex: 1; border: 1px solid #a9c3e6; background: #cfe0f5; }
.spin .off { background: #e6e8ec; }

/* Document area */
.workspace {
  position: relative;
  flex: 1;
  min-height: 0;
  display: flex;
  overflow: hidden;
  padding-left: 119px;
  background: linear-gradient(#a4c2ec 0, #98b8e4 75px, #86a8d6 140px, #648dc0 245px, #507bb2 325px, #6593d0 100%);
}
.swoosh { position: absolute; left: 0; top: 0; width: 119px; height: 130px; }
.page {
  position: relative;
  width: 776px;
  margin: 7px auto 0 0;
  padding: 4px 0 0 110px;
  border: 1px solid #2c3a52;
  border-bottom: 0;
  box-shadow: 3px 2px 3px #4a6a9a;
  background: #fff;
  color: #111;
  font: 16px/21px "Liberation Serif", "Times New Roman", serif;
  white-space: nowrap;
}
.page p { margin: 0 0 12px; }
.split { display: flex; }
.lead { width: 264px; }
.lead.short { width: 259px; }
.spell { text-decoration: underline wavy #f04a3c 1px; }
.grammar { text-decoration: underline wavy #3fa648 1px; }
.caret { display: inline-block; width: 1px; height: 18px; background: #000; vertical-align: middle; }

.scrollbar { width: 13px; display: flex; flex-direction: column; background: #c4d8f3; }
.scrollbar span { display: flex; justify-content: center; }
.cap { height: 14px; align-items: center; background: #9db9e0; }
.thumb { height: 155px; align-items: center; border: 1px solid #8fa9d0; background: linear-gradient(90deg, #e9f1fc, #b7cbeb); }
.track { flex: 1; align-items: flex-end; padding-bottom: 5px; background: linear-gradient(90deg, #86a4cf, #9bb6dc); }
.nav { height: 38px; align-items: center; }

/* Floating formatting bar */
.minibar, .menu {
  position: absolute;
  left: 332px;
  width: 162px;
  border: 1px solid #86888c;
  background: #fafafa;
  box-shadow: 2px 2px 2px #0006;
}
.minibar { top: 66px; padding: 0 1px 1px; border-radius: 2px; background: linear-gradient(#fdfdfe, #eef0f4); }
.minirow { display: flex; align-items: center; justify-content: space-between; height: 18px; padding-right: 3px; }
.minirow + .minirow { padding-left: 4px; }
.mname { width: 55px; }
.msize { width: 29px; }

/* Context menu */
.menu { top: 116px; padding: 1px; background: linear-gradient(90deg, #e9eeee 20px, #c5c5c5 20px, #c5c5c5 21px, #fafafa 21px); }
.menu hr { margin: 1px 0 1px 24px; border: 0; border-top: 1px solid #c5c5c5; }
.item {
  width: 100%;
  height: 16px;
  justify-content: flex-start;
  color: #1f2a6e;
}
.item > :first-child { width: 16px; text-align: center; }
.item span { padding-left: 8px; }
.item:disabled { color: #a2a4a8; }
.fonta { font: bold 12px/14px "Liberation Serif", serif; color: #31579c; }
.item.hot { background: linear-gradient(#fff6da, #ffe598 45%, #ffd453 50%, #ffe794); outline: 1px solid #f0d48a; outline-offset: -1px; }
.item.more::after { content: ""; margin-left: auto; margin-right: 6px; border: 3px solid transparent; border-left-color: #2f4f93; border-right: 0; }
.item.divided { background: linear-gradient(#c5c5c5, #c5c5c5) right 16px center / 1px 11px no-repeat; }

/* Status bar */
.status {
  flex: none;
  display: flex;
  align-items: center;
  height: 17px;
  padding: 0 4px 0 0;
  border-top: 1px solid #6d9ad4;
  color: #1c3c70;
  background: linear-gradient(#e3effd, #c3daf8 45%, #b0cdf3 50%, #d0e2fa);
}
.cell { padding: 0 6px; border-right: 1px solid #a9c6ee; white-space: nowrap; }
.cell:nth-child(4) { padding-left: 6px; }
.proof { border: 0; }
.views { display: flex; margin-left: auto; border: 1px solid #a3bede; background: #d6e5f8; }
.views button { width: 13px; height: 13px; }
.views .on { background: #ffd27c; }
.percent { padding: 0 6px; }
.round {
  width: 12px;
  height: 12px;
  border: 1px solid #66799a;
  border-radius: 50%;
  background: #f2f6fc;
  font: bold 10px/10px "Noto Sans", sans-serif;
}
.zoom { appearance: none; width: 76px; height: 12px; margin: 0; background: linear-gradient(#7d93b8, #7d93b8) center / 100% 1px no-repeat; }
.zoom::-webkit-slider-thumb { appearance: none; width: 7px; height: 10px; border: 1px solid #62779c; border-radius: 1px 1px 4px 4px; background: #eaf1fb; }

/* Taskbar */
.taskbar {
  flex: none;
  display: flex;
  align-items: stretch;
  height: 23px;
  color: #fff;
  background: linear-gradient(#4d8df2, #2a64df 3px, #245bdb 80%, #1c49b4);
}
.start {
  width: 71px;
  gap: 5px;
  border-radius: 0 8px 8px 0;
  background: linear-gradient(#6fb86c, #3d943a 4px, #38913a 75%, #2c702c);
  font: italic bold 13px/20px "Open Sans", "Noto Sans", sans-serif;
  text-shadow: 1px 1px 1px #1c4a1c;
}
.launch { display: flex; gap: 6px; padding-left: 9px; width: 124px; }
.tasks { display: flex; gap: 1px; flex: 1; padding: 2px 0 1px; }
.task {
  flex: 0 1 119px;
  gap: 4px;
  justify-content: flex-start;
  padding-left: 8px;
  border-radius: 2px;
  background: linear-gradient(#5a97fa, #3c80f2 4px, #3a7cee);
}
.task.current { background: #1e4fb4; }
.lang { align-self: center; padding-right: 10px; }
.tray {
  display: flex;
  align-items: center;
  gap: 3px;
  width: 163px;
  padding: 0 11px 0 6px;
  border-left: 1px solid #0c3a94;
  background: linear-gradient(#46b8f6, #139bee 4px, #1290e8 80%, #1073c4);
}
.tray time { margin-left: auto; }
```
